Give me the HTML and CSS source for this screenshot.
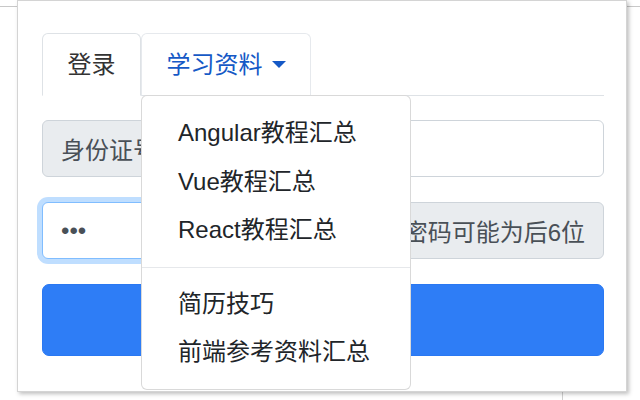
FILE: index.html
```html
<!DOCTYPE html>
<html>
<head>
    <title>登录</title>
    <link rel="stylesheet" href="styles.css">
</head>
<body>
    <div class="popup">
        <ul class="tabs">
            <li class="tab"><a class="tab-link active" href="#">登录</a></li>
            <li class="tab">
                <a class="tab-link open" href="#">学习资料<span class="caret"></span></a>
                <div class="menu">
                    <a class="menu-item first" href="#">Angular教程汇总</a>
                    <a class="menu-item" href="#">Vue教程汇总</a>
                    <a class="menu-item" href="#">React教程汇总</a>
                    <div class="menu-divider"></div>
                    <a class="menu-item" href="#">简历技巧</a>
                    <a class="menu-item" href="#">前端参考资料汇总</a>
                </div>
            </li>
        </ul>
        <form class="login" onsubmit="event.preventDefault();">
            <div class="field">
                <span class="addon addon-left">身份证号</span>
                <input class="control control-right" type="text">
            </div>
            <div class="field">
                <input class="control control-left focused" type="password" value="123">
                <span class="addon addon-right">默认密码可能为后6位</span>
            </div>
            <button class="submit" type="submit">立即登录</button>
        </form>
    </div>
</body>
</html>
```

FILE: styles.css
```css
* {
    box-sizing: border-box;
}
body {
    margin: 0;
    height: 400px;
    overflow: hidden;
    font-family: "Helvetica Neue", "Liberation Sans", "Noto Sans CJK SC", sans-serif;
    background:
        linear-gradient(#c8c8c8, #c8c8c8) 0 6px / 100% 1px no-repeat,
        linear-gradient(#d0d0d0, #d0d0d0) 562px 392px / 1px 8px no-repeat,
        #fff;
}
.popup {
    width: 610px;
    height: 392px;
    margin-left: 17px;
    padding: 32px 22px 0 24px;
    background-color: #fff;
    border: 1px solid #d4d4d4;
    box-shadow: 2px 2px 4px rgba(0, 0, 0, 0.25);
}
.tabs {
    display: flex;
    list-style: none;
    margin: 0;
    padding: 0;
    border-bottom: 1px solid #dee2e6;
}
.tab {
    position: relative;
    margin-bottom: -1px;
}
.tab-link {
    display: block;
    padding: 13px 24.5px;
    font-size: 24px;
    line-height: 35px;
    text-decoration: none;
    border: 1px solid transparent;
    border-radius: 6px 6px 0 0;
}
.tab-link.active {
    color: #333;
    background-color: #fff;
    border-color: #dee2e6 #dee2e6 #fff;
}
.tab-link.open {
    color: #1559c6;
    border-color: #e6e9ed #e6e9ed #dee2e6;
}
.caret {
    display: inline-block;
    margin-left: 9px;
    vertical-align: 5px;
    border-top: 7px solid;
    border-left: 7px solid transparent;
    border-right: 7px solid transparent;
}
.menu {
    position: absolute;
    top: calc(100% - 1px);
    left: 0;
    z-index: 10;
    width: 270px;
    padding: 13px 0 12px;
    background-color: #fff;
    border: 1px solid rgba(0, 0, 0, 0.15);
    border-radius: 6px;
}
.menu-item {
    display: block;
    padding: 6px 36px;
    font-size: 24px;
    line-height: 36.5px;
    color: #212529;
    text-decoration: none;
    white-space: nowrap;
}
.menu-divider {
    margin: 12px 0;
    border-top: 1px solid #e6e8eb;
}
.login {
    margin-top: 24px;
}
.field {
    display: flex;
    height: 57px;
    margin-bottom: 25px;
}
.addon {
    display: flex;
    align-items: center;
    padding: 0 18px;
    font-size: 24px;
    color: #495057;
    background-color: #e9ecef;
    border: 1px solid #ced4da;
    white-space: nowrap;
}
.addon-left {
    border-radius: 6px 0 0 6px;
}
.addon-right {
    margin-left: -1px;
    border-radius: 0 6px 6px 0;
}
.control {
    flex: 1;
    min-width: 0;
    padding: 0 18px;
    font-family: inherit;
    font-size: 24px;
    color: #495057;
    background-color: #fff;
    border: 1px solid #ced4da;
    outline: none;
}
.control-right {
    margin-left: -1px;
    border-radius: 0 6px 6px 0;
}
.control-left {
    border-radius: 6px 0 0 6px;
}
.focused {
    position: relative;
    z-index: 1;
    border-color: #80bdff;
    box-shadow: 0 0 0 5px rgba(0, 123, 255, 0.25);
}
.submit {
    display: block;
    width: 100%;
    height: 72px;
    font-family: inherit;
    font-size: 30px;
    color: #fff;
    background-color: #2e7df6;
    border: 1px solid #2a78f2;
    border-radius: 7px;
    cursor: pointer;
}
```
